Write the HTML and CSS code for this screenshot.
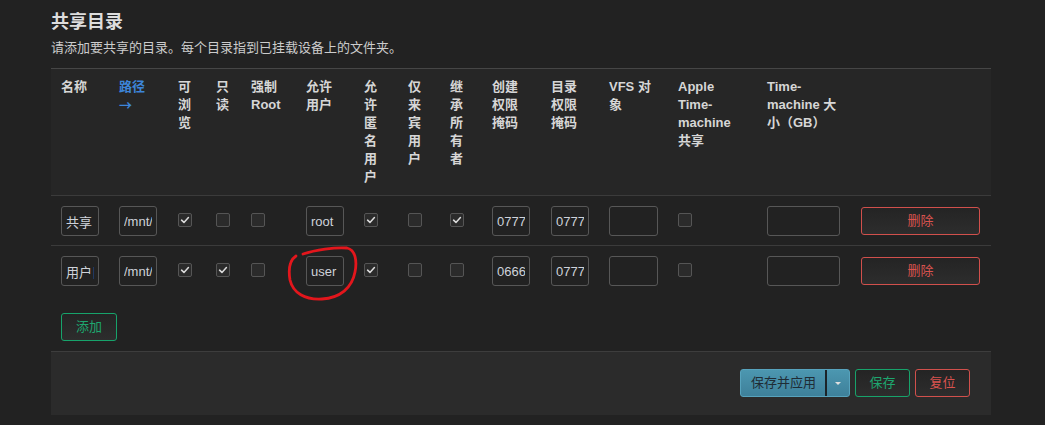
FILE: index.html
```html
<!DOCTYPE html>
<html lang="zh-CN">
<head>
<meta charset="utf-8">
<title>共享目录</title>
<link rel="stylesheet" href="styles.css">
</head>
<body>
<div class="page">
  <h2 class="title">共享目录</h2>
  <p class="desc">请添加要共享的目录。每个目录指到已挂载设备上的文件夹。</p>
  <table class="shares">
    <colgroup>
      <col class="c1"><col class="c2"><col class="c3"><col class="c4"><col class="c5">
      <col class="c6"><col class="c7"><col class="c8"><col class="c9"><col class="c10">
      <col class="c11"><col class="c12"><col class="c13"><col class="c14"><col class="c15">
    </colgroup>
    <thead>
      <tr>
        <th>名称</th>
        <th><span class="sort">路径 <span class="arrow">→</span></span></th>
        <th>可浏览</th>
        <th>只读</th>
        <th>强制 Root</th>
        <th>允许用户</th>
        <th>允许匿名用户</th>
        <th>仅来宾用户</th>
        <th>继承所有者</th>
        <th>创建权限掩码</th>
        <th>目录权限掩码</th>
        <th>VFS 对象</th>
        <th>Apple Time-machine 共享</th>
        <th>Time-machine 大小（GB）</th>
        <th></th>
      </tr>
    </thead>
    <tbody>
      <tr>
        <td><input class="txt w38" type="text" value="共享"></td>
        <td><input class="txt w38" type="text" value="/mnt/sda1/share"></td>
        <td><span class="cb on"><svg viewBox="0 0 14 14"><path d="M3 7.2 L5.8 9.8 L11 4.2"/></svg></span></td>
        <td><span class="cb"></span></td>
        <td><span class="cb"></span></td>
        <td><input class="txt w38" type="text" value="root"></td>
        <td><span class="cb on"><svg viewBox="0 0 14 14"><path d="M3 7.2 L5.8 9.8 L11 4.2"/></svg></span></td>
        <td><span class="cb"></span></td>
        <td><span class="cb on"><svg viewBox="0 0 14 14"><path d="M3 7.2 L5.8 9.8 L11 4.2"/></svg></span></td>
        <td><input class="txt w38" type="text" value="0777"></td>
        <td><input class="txt w38" type="text" value="0777"></td>
        <td><input class="txt w49" type="text" value=""></td>
        <td><span class="cb"></span></td>
        <td><input class="txt w73" type="text" value=""></td>
        <td><button class="btn btn-del" type="button">删除</button></td>
      </tr>
      <tr>
        <td><input class="txt w38" type="text" value="用户目录"></td>
        <td><input class="txt w38" type="text" value="/mnt/sda1/user"></td>
        <td><span class="cb on"><svg viewBox="0 0 14 14"><path d="M3 7.2 L5.8 9.8 L11 4.2"/></svg></span></td>
        <td><span class="cb on"><svg viewBox="0 0 14 14"><path d="M3 7.2 L5.8 9.8 L11 4.2"/></svg></span></td>
        <td><span class="cb"></span></td>
        <td><input class="txt w38" type="text" value="user"></td>
        <td><span class="cb on"><svg viewBox="0 0 14 14"><path d="M3 7.2 L5.8 9.8 L11 4.2"/></svg></span></td>
        <td><span class="cb"></span></td>
        <td><span class="cb"></span></td>
        <td><input class="txt w38" type="text" value="0666"></td>
        <td><input class="txt w38" type="text" value="0777"></td>
        <td><input class="txt w49" type="text" value=""></td>
        <td><span class="cb"></span></td>
        <td><input class="txt w73" type="text" value=""></td>
        <td><button class="btn btn-del" type="button">删除</button></td>
      </tr>
    </tbody>
  </table>
  <div class="add-row">
    <button class="btn btn-add" type="button">添加</button>
  </div>
  <div class="footer">
    <div class="split">
      <button class="split-main" type="button">保存并应用</button>
      <button class="split-drop" type="button"><span class="caret"></span></button>
    </div>
    <button class="btn btn-save" type="button">保存</button>
    <button class="btn btn-reset" type="button">复位</button>
  </div>
</div>
<svg class="mark" viewBox="0 0 76 62" width="76" height="62">
  <path d="M19 10 C31 6, 51 3, 63 4 C72 6, 73 18, 71 28 C68 44, 56 54, 38 55 C21 56, 9 49, 6 36 C4 24, 6 16, 12 12"/>
</svg>
</body>
</html>
```

FILE: styles.css
```css
* { box-sizing: border-box; }

html, body {
  margin: 0;
  padding: 0;
}

body {
  position: relative;
  height: 425px;
  overflow: hidden;
  background: #222222;
  color: #cccccc;
  font-family: "Liberation Sans", "Noto Sans CJK SC", sans-serif;
  font-size: 13px;
}

.page {
  width: 991px;
  padding: 10px 0 0 51px;
}

.title {
  margin: 0;
  font-size: 18px;
  line-height: 24px;
  font-weight: bold;
  color: #dddddd;
}

.desc {
  margin: 4px 0 10px;
  font-size: 13px;
  line-height: 20px;
  color: #cccccc;
}

.shares {
  width: 940px;
  table-layout: fixed;
  border-collapse: separate;
  border-spacing: 0;
  border-top: 1px solid #464646;
}

.c1 { width: 58px; }
.c2 { width: 59px; }
.c3 { width: 38px; }
.c4 { width: 35px; }
.c5 { width: 55px; }
.c6 { width: 58px; }
.c7 { width: 44px; }
.c8 { width: 42px; }
.c9 { width: 42px; }
.c10 { width: 59px; }
.c11 { width: 58px; }
.c12 { width: 69px; }
.c13 { width: 89px; }
.c14 { width: 94px; }
.c15 { width: 140px; }

.shares th {
  background: #262626;
  padding: 9px 12px 9px 10px;
  line-height: 18px;
  font-size: 13px;
  font-weight: bold;
  text-align: left;
  vertical-align: top;
  color: #d6d6d6;
}

.sort { color: #3d85d8; }
.arrow {
  font-family: "Noto Sans CJK SC", sans-serif;
  font-weight: bold;
}

.shares td {
  padding: 10px 10px 9px;
  border-top: 1px solid #3b3b3b;
  vertical-align: middle;
  line-height: 18px;
}

.txt {
  display: block;
  height: 30px;
  padding: 0 4px;
  border: 1px solid #575757;
  border-radius: 3px;
  background: #222222;
  color: #cfd3da;
  font-family: "Liberation Sans", "Noto Sans CJK SC", sans-serif;
  font-size: 13px;
  outline: none;
}
.w38 { width: 38px; }
.w49 { width: 49px; }
.w73 { width: 73px; }

.cb {
  display: block;
  width: 14px;
  height: 14px;
  margin-top: -2px;
  border: 1px solid #555555;
  border-radius: 2px;
  background: #2b2b2b;
}
.cb svg {
  display: block;
  width: 12px;
  height: 12px;
}
.cb path {
  fill: none;
  stroke: #dcdcdc;
  stroke-width: 1.8;
  stroke-linecap: round;
  stroke-linejoin: round;
}

.btn {
  height: 28px;
  padding: 0 14px;
  border: 1px solid;
  border-radius: 3px;
  background: linear-gradient(#242424, #2d2d2d);
  font-family: "Liberation Sans", "Noto Sans CJK SC", sans-serif;
  font-size: 13px;
  line-height: 26px;
  cursor: pointer;
}

.btn-del {
  display: block;
  width: 119px;
  border-color: #d1504c;
  color: #d9534f;
}

.add-row {
  padding: 18px 0 0 10px;
}

.btn-add {
  border-color: #17a36b;
  color: #1ea66f;
}

.footer {
  display: flex;
  justify-content: flex-end;
  align-items: center;
  gap: 5px;
  width: 940px;
  margin-top: 10px;
  padding: 17px 21px 18px;
  border-top: 1px solid #3d3d3d;
  background: #2b2b2b;
}

.split {
  display: flex;
  height: 28px;
  border: 1px solid #57a3bd;
  border-radius: 3px;
  background: linear-gradient(#4c97b0, #3e809a);
  overflow: hidden;
}
.split-main,
.split-drop {
  border: 0;
  background: transparent;
  color: #1f2c35;
  font-family: "Liberation Sans", "Noto Sans CJK SC", sans-serif;
  font-size: 13px;
  line-height: 26px;
  cursor: pointer;
}
.split-main {
  width: 84px;
  padding: 0 0 0 1px;
}
.split-drop {
  width: 24px;
  padding: 0;
  border-left: 2px solid #1b2328;
  display: flex;
  align-items: center;
  justify-content: center;
}
.caret {
  width: 0;
  height: 0;
  border-left: 3px solid transparent;
  border-right: 3px solid transparent;
  border-top: 3px solid #e0e0e0;
}

.btn-save {
  width: 55px;
  padding: 0;
  border-color: #17a36b;
  color: #1ea66f;
}
.btn-reset {
  width: 55px;
  padding: 0;
  border-color: #d1504c;
  color: #d9534f;
}

.mark {
  position: absolute;
  left: 284px;
  top: 244px;
  overflow: visible;
}
.mark path {
  fill: none;
  stroke: #e3161c;
  stroke-width: 2.8;
  stroke-linecap: round;
  stroke-linejoin: round;
}
```
